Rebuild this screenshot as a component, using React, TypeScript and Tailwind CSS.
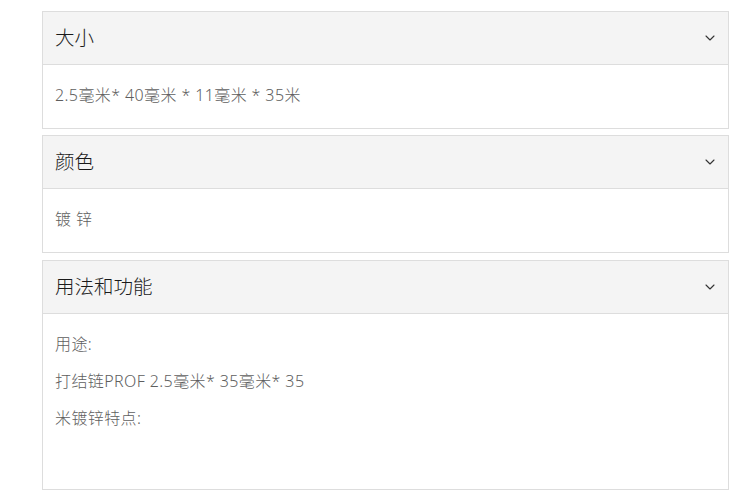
import { ChevronDown } from 'lucide-react';

interface PanelProps {
  title: string;
  lines: string[];
  className?: string;
  bodyClass?: string;
}

function Panel({ title, lines, className, bodyClass }: PanelProps) {
  return (
    <div className={`border border-[#dddddd] bg-white ${className ?? ''}`}>
      <div className="h-[53px] flex items-center justify-between pl-3 pr-[10px] bg-[#f4f4f4] border-b border-[#dddddd]">
        <span className="text-[19.5px] text-[#1a1a1a] font-light">{title}</span>
        <ChevronDown size={16} strokeWidth={1.6} className="text-[#333333]" />
      </div>
      <div className={`px-3 pt-[18px] ${bodyClass ?? 'pb-[21px]'}`}>
        {lines.map((line, i) => (
          <p
            key={i}
            className={`text-[16px] leading-[24px] tracking-[0.4px] text-[#5e5e5e] font-light ${i < lines.length - 1 ? 'mb-[13px]' : ''}`}
          >
            {line}
          </p>
        ))}
      </div>
    </div>
  );
}

export default function App() {
  return (
    <div
      className="w-[737px] h-[500px] bg-white pt-[11px] pl-[42px]"
      style={{ fontFamily: '"Noto Sans", "Noto Sans CJK SC", sans-serif' }}
    >
      <div className="w-[687px] flex flex-col">
        <Panel title="大小" lines={['2.5毫米* 40毫米 * 11毫米 * 35米']} className="mb-[6px]" />
        <Panel title="颜色" lines={['镀 锌']} className="mb-[7px]" />
        <Panel
          title="用法和功能"
          lines={['用途:', '打结链PROF 2.5毫米* 35毫米* 35', '米镀锌特点:']}
          bodyClass="pb-[59px]"
        />
      </div>
    </div>
  );
}
